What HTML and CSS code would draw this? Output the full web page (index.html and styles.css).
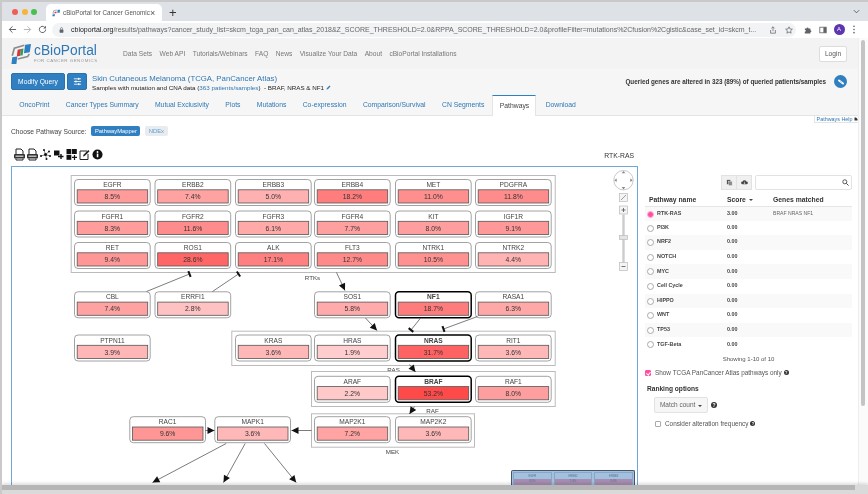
FILE: index.html
```html
<!DOCTYPE html>
<html lang="en">
<head>
    <meta charset="UTF-8">
    <meta name="viewport" content="width=device-width, initial-scale=1.0">
    <title>cBioPortal for Cancer Genomics</title>
    <link rel="stylesheet" href="styles.css">
</head>
<body>
    <div class="tabstrip">
        <div class="lights"><span class="light red"></span><span class="light yellow"></span><span class="light green"></span></div>
        <div class="tab">
            <svg class="favicon" viewBox="0 0 24 20"><path d="M3 13 5 3 15 1" fill="none" stroke="#8a8a8a" stroke-width="2"/><path d="M17 0h7l-1 9h-7z" fill="#2f7fc1"/><path d="M8 6h6l-1 5H7z" fill="#d9343a"/><path d="M2 14h7l-1 6H1z" fill="#2f7fc1"/></svg>
            <span class="tab-title">cBioPortal for Cancer Genomic</span>
            <span class="tab-close">×</span>
        </div>
        <span class="tab-new">+</span>
        <svg class="tab-menu" viewBox="0 0 8 5"><path d="M1 1l3 3 3-3" fill="none" stroke="#555" stroke-width="1"/></svg>
    </div>

    <div class="urlbar">
        <svg class="nav-icon back" viewBox="0 0 10 10"><path d="M9 5H1.5M5 1.5 1.5 5 5 8.5" fill="none" stroke="#5f6368" stroke-width="1.1"/></svg>
        <svg class="nav-icon forward" viewBox="0 0 10 10"><path d="M1 5h7.500M5 1.500 8.500 5 5 8.500" fill="none" stroke="#b4b6b9" stroke-width="1.1"/></svg>
        <svg class="nav-icon reload" viewBox="0 0 10 10"><path d="M8.500 5A3.500 3.500 0 1 1 7.400 2.400" fill="none" stroke="#5f6368" stroke-width="1.100"/><path d="M8.800 .8v3h-3z" fill="#5f6368"/></svg>
        <div class="omnibox">
            <svg class="lock" viewBox="0 0 6 8"><rect x=".5" y="3.200" width="5" height="4.300" rx=".6" fill="#5f6368"/><path d="M1.700 3.500V2a1.300 1.300 0 0 1 2.600 0v1.500" fill="none" stroke="#5f6368" stroke-width=".8"/></svg>
            <span class="url"><b>cbioportal.org</b>/results/pathways?cancer_study_list=skcm_tcga_pan_can_atlas_2018&amp;Z_SCORE_THRESHOLD=2.0&amp;RPPA_SCORE_THRESHOLD=2.0&amp;profileFilter=mutations%2Cfusion%2Cgistic&amp;case_set_id=skcm_t...</span>
            <svg class="omni-icon" viewBox="0 0 10 10"><path d="M5 6.500V1M3 3l2-2 2 2M2 5v4h6V5" fill="none" stroke="#5f6368" stroke-width=".9"/></svg>
            <svg class="omni-icon" viewBox="0 0 10 10"><path d="M5 1l1.200 2.700 3 .3-2.200 2 .6 3L5 7.500 2.400 9l.6-3L.8 4l3-.3z" fill="none" stroke="#5f6368" stroke-width=".9"/></svg>
        </div>
        <svg class="bar-icon" viewBox="0 0 10 10"><path d="M1 3h2.200a1.200 1.200 0 0 1 2.400 0H8v2.300a1.200 1.200 0 0 1 0 2.400V9.500H1V7.200a1.200 1.200 0 0 0 0-2.400z" fill="#5f6368"/></svg>
        <svg class="bar-icon" viewBox="0 0 10 10"><rect x="1" y="1.500" width="8" height="7" fill="none" stroke="#5f6368"/><rect x="5.500" y="1.500" width="3.500" height="7" fill="#5f6368"/></svg>
        <span class="avatar">A</span>
        <svg class="kebab" viewBox="0 0 4 10"><circle cx="2" cy="1.500" r=".9" fill="#5f6368"/><circle cx="2" cy="5" r=".9" fill="#5f6368"/><circle cx="2" cy="8.500" r=".9" fill="#5f6368"/></svg>
    </div>

    <div class="viewport">
        <main class="page">
            <header class="navbar">
                <div class="logo">
                    <svg class="logo-mark" viewBox="0 0 24 24">
                        <path d="M1.500 14 4 5 16 1.500" fill="none" stroke="#8c8c8c" stroke-width="2"/>
                        <path d="M17 1 24 0l-1.500 10-7 1z" fill="#2f7fc1"/>
                        <path d="M8 7l4-1-1 8-4 1z" fill="#d9343a"/>
                        <path d="M12 6l3-.5-1 8-3 .5z" fill="#2e9e5b"/>
                        <path d="M1.500 16l6-1-1 9H.5z" fill="#2f7fc1"/>
                        <path d="M8 18 20 15l2-3" fill="none" stroke="#8c8c8c" stroke-width="1.800"/>
                    </svg>
                    <div class="logo-text">
                        <span class="logo-name">cBioPortal</span>
                        <span class="logo-sub">FOR CANCER GENOMICS</span>
                    </div>
                </div>
                <nav class="nav-links">
                    <a>Data Sets</a><a>Web API</a><a>Tutorials/Webinars</a><a>FAQ</a><a>News</a><a>Visualize Your Data</a><a>About</a><a>cBioPortal Installations</a>
                </nav>
                <button class="login" type="button">Login</button>
            </header>

            <section class="study">
                <button class="btn-primary modify" type="button">Modify Query</button>
                <button class="btn-primary sliders" type="button">
                    <svg viewBox="0 0 10 10"><path d="M1 2h8M1 5h8M1 8h8" stroke="#fff" stroke-width=".9"/><rect x="5.500" y="1" width="1.600" height="2" fill="#fff"/><rect x="2.500" y="4" width="1.600" height="2" fill="#fff"/><rect x="5.500" y="7" width="1.600" height="2" fill="#fff"/></svg>
                </button>
                <div class="study-info">
                    <a class="study-title">Skin Cutaneous Melanoma (TCGA, PanCancer Atlas)</a>
                    <p class="study-sub">Samples with mutation and CNA data (<a>363 patients/samples</a>) &nbsp;- BRAF, NRAS &amp; NF1
                        <svg class="pencil" viewBox="0 0 8 8"><path d="M.8 7.200 1.300 5 5.500.8l1.700 1.700L3 6.700z" fill="#2f7fc1"/></svg>
                    </p>
                </div>
                <p class="altered">Queried genes are altered in 323 (89%) of queried patients/samples</p>
                <span class="share-link">
                    <svg viewBox="0 0 10 10"><path d="M2.500 3 7.500 7" stroke="#fff" stroke-width="2.400" stroke-linecap="round"/><path d="M4.400 4.500 5.600 5.500" stroke="#2f7fc1" stroke-width=".8"/></svg>
                </span>
            </section>

            <nav class="tabs">
                <a>OncoPrint</a><a>Cancer Types Summary</a><a>Mutual Exclusivity</a><a>Plots</a><a>Mutations</a><a>Co-expression</a><a>Comparison/Survival</a><a>CN Segments</a><a class="active">Pathways</a><a>Download</a>
            </nav>

            <div class="content">
                <a class="help-tag">Pathways Help <svg viewBox="0 0 8 8"><path d="M1 1h3l3 3v3H1z" fill="#333"/></svg></a>

                <div class="left">
                    <div class="source">
                        <span>Choose Pathway Source:</span>
                        <span class="pill on">PathwayMapper</span>
                        <span class="pill">NDEx</span>
                    </div>
                    <div class="tools">
                        <div class="tool-icons">
                            <svg viewBox="0 0 11 13"><path d="M2 6V1h5l2 2v3" fill="none" stroke="#222"/><rect y="6" width="11" height="4.500" rx="1" fill="#333"/><rect x="1.500" y="7.500" width="8" height="1.500" fill="#bbb"/><path d="M2 10.500V12h7v-1.500" fill="none" stroke="#222"/></svg>
                            <svg viewBox="0 0 11 13"><path d="M2 6V1h5l2 2v3" fill="none" stroke="#222"/><rect y="6" width="11" height="4.500" rx="1" fill="#333"/><rect x="1.500" y="7.500" width="8" height="1.500" fill="#bbb"/><path d="M2 10.500V12h7v-1.500" fill="none" stroke="#222"/></svg>
                            <svg viewBox="0 0 11 13"><path d="M5.500 6.500 1 8M5.500 6.500 4 2M5.500 6.500 9 3.500M5.500 6.500 10 8M5.500 6.500 6.500 11" stroke="#333" stroke-width=".6"/><circle cx="5.500" cy="6.500" r="1.500" fill="#111"/><circle cx="1" cy="8" r="1" fill="#111"/><circle cx="4" cy="2" r="1" fill="#111"/><circle cx="9" cy="3.500" r="1" fill="#111"/><circle cx="10" cy="8" r="1" fill="#111"/><circle cx="6.500" cy="11" r="1" fill="#111"/></svg>
                            <svg viewBox="0 0 11 13"><rect x="1" y="2.500" width="5.500" height="5" fill="#111"/><path d="M5 8.500h5.500M8 6v5" stroke="#111" stroke-width="1.400"/></svg>
                            <svg viewBox="0 0 11 13"><rect x=".5" y="1" width="4.800" height="5" fill="#111"/><rect x="6" y="1" width="4.800" height="5" fill="#111"/><rect x=".5" y="6.800" width="4.800" height="5" fill="#111"/><path d="M6 9.300h5M8.500 7v5" stroke="#111" stroke-width="1.200"/></svg>
                            <svg viewBox="0 0 11 13"><path d="M8 3H1v8.500h8V6" fill="none" stroke="#222" stroke-width="1"/><path d="M4 8.500 4.500 6.800 9.300 2l1.200 1.200L5.700 8z" fill="#222"/></svg>
                            <svg viewBox="0 0 12 13"><circle cx="6" cy="6.500" r="5.500" fill="#111"/><rect x="5.200" y="5.500" width="1.700" height="4" fill="#fff"/><circle cx="6" cy="3.800" r="1" fill="#fff"/></svg>
                        </div>
                        <span class="pathway-name">RTK-RAS</span>
                    </div>
                    <div class="canvas">
                        <svg id="pathway" class="diagram" viewBox="12.5 167.5 622 317"></svg>
                        <div class="minimap">
                            <div class="mini-node"><span>EGFR</span><b>8.5%</b></div>
                            <div class="mini-node"><span>ERBB2</span><b>7.4%</b></div>
                            <div class="mini-node"><span>ERBB3</span><b>5.0%</b></div>
                        </div>
                    </div>
                </div>

                <aside class="right">
                    <div class="table-tools">
                        <div class="btn-group">
                            <button type="button"><svg viewBox="0 0 8 8"><rect x="1" y="1" width="4" height="5" fill="#555"/><rect x="3" y="2.500" width="4" height="5" fill="#888" stroke="#eee" stroke-width=".5"/></svg></button>
                            <button type="button"><svg viewBox="0 0 8 8"><path d="M1.500 6a1.500 1.500 0 0 1 .3-3A2.300 2.300 0 0 1 6.200 3 1.500 1.500 0 0 1 6.500 6z" fill="#444"/><path d="M4 3v2.500M3 4.500l1 1 1-1" stroke="#eee" stroke-width=".6" fill="none"/></svg></button>
                        </div>
                        <div class="search"><svg viewBox="0 0 8 8"><circle cx="3.200" cy="3.200" r="2.300" fill="none" stroke="#444"/><path d="M5 5l2.500 2.500" stroke="#444" stroke-width="1.100"/></svg></div>
                    </div>
                    <table class="pathways">
                        <thead>
                            <tr><th class="col-name">Pathway name</th><th class="col-score">Score <i class="caret"></i></th><th>Genes matched</th></tr>
                        </thead>
                        <tbody>
                            <tr><td class="col-name"><i class="radio on"></i>RTK-RAS</td><td class="col-score">3.00</td><td class="genes">BRAF NRAS NF1</td></tr>
                            <tr><td class="col-name"><i class="radio"></i>PI3K</td><td class="col-score">0.00</td><td></td></tr>
                            <tr><td class="col-name"><i class="radio"></i>NRF2</td><td class="col-score">0.00</td><td></td></tr>
                            <tr><td class="col-name"><i class="radio"></i>NOTCH</td><td class="col-score">0.00</td><td></td></tr>
                            <tr><td class="col-name"><i class="radio"></i>MYC</td><td class="col-score">0.00</td><td></td></tr>
                            <tr><td class="col-name"><i class="radio"></i>Cell Cycle</td><td class="col-score">0.00</td><td></td></tr>
                            <tr><td class="col-name"><i class="radio"></i>HIPPO</td><td class="col-score">0.00</td><td></td></tr>
                            <tr><td class="col-name"><i class="radio"></i>WNT</td><td class="col-score">0.00</td><td></td></tr>
                            <tr><td class="col-name"><i class="radio"></i>TP53</td><td class="col-score">0.00</td><td></td></tr>
                            <tr><td class="col-name"><i class="radio"></i>TGF-Beta</td><td class="col-score">0.00</td><td></td></tr>
                        </tbody>
                    </table>
                    <p class="showing">Showing 1-10 of 10</p>
                    <label class="check-row"><i class="check on"></i>Show TCGA PanCancer Atlas pathways only <i class="help">?</i></label>
                    <h4 class="ranking">Ranking options</h4>
                    <div class="rank-row"><button class="match" type="button">Match count <i class="caret"></i></button><i class="help big">?</i></div>
                    <label class="check-row alt"><i class="check"></i>Consider alteration frequency <i class="help">?</i></label>
                </aside>
            </div>
        </main>
        <div class="vscroll"><div class="vthumb"></div></div>
    </div>
    <div class="hscroll"><div class="hthumb"></div></div>

    <script src="pathway.js"></script>
</body>
</html>
```

FILE: styles.css
```css
* {
    box-sizing: border-box;
}

html, body {
    margin: 0;
    height: 494px;
    overflow: hidden;
}

body {
    font-family: "Liberation Sans", Arial, sans-serif;
    background-color: #fff;
    color: #333;
    border-left: 2px solid #c9c9c9;
    display: flex;
    flex-direction: column;
    filter: blur(0.3px);
}

p, h4 {
    margin: 0;
}

button {
    font-family: inherit;
    padding: 0;
}

/* browser chrome */
.tabstrip {
    height: 21px;
    flex: none;
    background-color: #dee1e6;
    border-top: 2px solid #c9c9c9;
    display: flex;
    align-items: flex-end;
    position: relative;
}

.lights {
    width: 44px;
    padding-left: 10px;
    align-self: center;
    display: flex;
    gap: 3.500px;
}

.light {
    width: 6px;
    height: 6px;
    border-radius: 50%;
}

.red { background-color: #ee5f56; }
.yellow { background-color: #f4b53a; }
.green { background-color: #47c04f; }

.tab {
    width: 116px;
    height: 17px;
    background-color: #fff;
    border-radius: 5px 5px 0 0;
    display: flex;
    align-items: center;
    padding: 0 3px 0 6px;
    font-size: 6.300px;
    color: #555;
}

.favicon {
    width: 8px;
    height: 8px;
    margin-right: 3px;
}

.tab-title {
    flex: 1;
    white-space: nowrap;
}

.tab-close {
    font-size: 9px;
    width: 9px;
}

.tab-new {
    font-size: 13px;
    color: #333;
    margin-left: 7px;
    line-height: 17px;
}

.tab-menu {
    width: 7px;
    height: 5px;
    margin-left: auto;
    margin-right: 8px;
    align-self: center;
}

.urlbar {
    height: 17px;
    flex: none;
    background-color: #fff;
    display: flex;
    align-items: center;
    padding-left: 6px;
}

.nav-icon {
    width: 9px;
    height: 9px;
    margin-right: 6px;
}

.omnibox {
    width: 744px;
    height: 14px;
    margin-left: -1px;
    margin-right: 8px;
    background-color: #f1f3f4;
    border-radius: 7px;
    display: flex;
    align-items: center;
    padding-left: 7px;
    padding-right: 3px;
    gap: 7px;
}

.lock {
    width: 5px;
    height: 6px;
    flex: none;
}

.url {
    flex: 1;
    font-size: 7px;
    line-height: 14px;
    color: #666;
    white-space: nowrap;
}

.url b {
    font-weight: normal;
    color: #222;
}

.omni-icon {
    width: 8px;
    height: 8px;
    flex: none;
    margin-left: 1px;
}

.bar-icon {
    width: 8px;
    height: 8px;
    margin-right: 7px;
}

.avatar {
    width: 11px;
    height: 11px;
    border-radius: 50%;
    background-color: #5e35b1;
    color: #fff;
    font-size: 6px;
    line-height: 11px;
    text-align: center;
    margin-left: -.5px;
}

.kebab {
    width: 4px;
    height: 9px;
    margin-left: 7.500px;
}

/* page */
.viewport {
    height: 447px;
    flex: none;
    display: flex;
}

.page {
    width: 856px;
    flex: none;
    overflow: hidden;
}

.vscroll {
    flex: 1;
    background-color: #fbfbfb;
    border-left: 1px solid #eee;
    padding: 2px 3px 0 2px;
}

.vthumb {
    height: 366px;
    background-color: #c4c4c4;
    border-radius: 2px;
}

.hscroll {
    flex: 1;
    position: relative;
    background-color: #dadada;
    box-shadow: 0 -2px 3px rgba(0, 0, 0, 0.12);
}

.hthumb {
    width: 853px;
    height: 5px;
    background-color: #b6b6b6;
}

.navbar {
    height: 31px;
    background-color: #f3f3f3;
    display: flex;
    align-items: center;
    padding: 0 11px 0 9px;
}

.logo {
    display: flex;
    align-items: center;
    width: 112px;
}

.logo-mark {
    width: 20px;
    height: 20px;
    margin-right: 3px;
}

.logo-text {
    display: flex;
    flex-direction: column;
    margin-top: 1px;
}

.logo-name {
    font-size: 13.800px;
    line-height: 14px;
    color: #2f78b4;
}

.logo-sub {
    font-size: 4.400px;
    line-height: 6px;
    letter-spacing: .5px;
    color: #999;
    white-space: nowrap;
}

.nav-links {
    display: flex;
    gap: 7.400px;
    font-size: 6.650px;
    color: #777;
}

.login {
    margin-left: auto;
    width: 28px;
    height: 16px;
    background-color: #fff;
    border: 1px solid #ddd;
    border-radius: 2px;
    font-size: 6.600px;
    color: #555;
}

.study {
    height: 26px;
    background-color: #f6f6f6;
    display: flex;
    align-items: flex-start;
    padding: 4px 11px 0 9px;
}

.btn-primary {
    height: 17px;
    background-color: #2f7fc1;
    border: 1px solid #2a72ad;
    border-radius: 2px;
    color: #fff;
    font-size: 6.700px;
}

.modify {
    width: 54px;
    margin-right: 2px;
}

.sliders {
    width: 20px;
    margin-right: 5px;
}

.sliders svg {
    width: 9px;
    height: 9px;
    display: block;
    margin: auto;
}

.study-title {
    display: block;
    font-size: 7.800px;
    line-height: 9px;
    margin-top: 1px;
    color: #2f78b4;
    white-space: nowrap;
}

.study-sub {
    font-size: 6.250px;
    line-height: 9px;
    margin-top: 0;
    color: #222;
    white-space: nowrap;
}

.study-sub a {
    color: #2f78b4;
}

.pencil {
    width: 5px;
    height: 5px;
}

.altered {
    margin-left: auto;
    margin-top: 5px;
    font-size: 6.300px;
    font-weight: bold;
    color: #333;
    white-space: nowrap;
}

.share-link {
    width: 13px;
    height: 13px;
    margin-left: 8px;
    margin-top: 2px;
    border-radius: 50%;
    background-color: #2f7fc1;
    display: flex;
    align-items: center;
    justify-content: center;
}

.share-link svg {
    width: 8px;
    height: 8px;
}

.tabs {
    height: 21px;
    background-color: #f6f6f6;
    border-bottom: 1px solid #e4e4e4;
    display: flex;
    gap: 0;
    padding-left: 9px;
    font-size: 6.800px;
    color: #2f78b4;
    line-height: 20px;
}

.tabs a {
    padding: 0 8.200px;
    white-space: nowrap;
}

.tabs .active {
    background-color: #fff;
    color: #444;
    border-top: 1px solid #2f7fc1;
    border-left: 1px solid #e4e4e4;
    border-right: 1px solid #e4e4e4;
    height: 21px;
    width: 44px;
    padding: 0;
    text-align: center;
    margin: 0 1px 0 0;
    line-height: 20px;
}

.content {
    position: relative;
    display: flex;
    padding-left: 9px;
    background-color: #fff;
}

.help-tag {
    position: absolute;
    top: 0;
    right: 0;
    padding-left: 2px;
    font-size: 5.400px;
    line-height: 6px;
    color: #2f78b4;
    border-left: 1px solid #e4e4e4;
    border-bottom: 1px solid #e4e4e4;
    white-space: nowrap;
}

.help-tag svg {
    width: 4px;
    height: 4px;
}

.left {
    width: 627px;
    flex: none;
}

.source {
    display: flex;
    align-items: center;
    gap: 5px;
    height: 10px;
    margin-top: 10px;
    font-size: 6.700px;
    color: #444;
}

.pill {
    height: 10px;
    line-height: 10px;
    padding: 0 3.500px;
    border-radius: 2px;
    background-color: #e9ecef;
    color: #5f9bd0;
    font-size: 5.800px;
}

.pill.on {
    background-color: #2f7fc1;
    color: #fff;
}

.tools {
    display: flex;
    justify-content: space-between;
    align-items: center;
    height: 13px;
    margin-top: 12px;
    padding-left: 3px;
    padding-right: 4px;
}

.tool-icons {
    display: flex;
    gap: 2px;
}

.tool-icons svg {
    width: 11px;
    height: 13px;
}

.pathway-name {
    font-size: 6.800px;
    color: #333;
    margin-top: 1px;
}

.canvas {
    position: relative;
    height: 319px;
    margin-top: 5px;
    border: 2px solid #6fa8d8;
    border-width: 1.500px 1.500px 0 1.500px;
    overflow: hidden;
}

.diagram {
    display: block;
    width: 622px;
    height: 317px;
    font-family: "Liberation Sans", Arial, sans-serif;
}

.minimap {
    position: absolute;
    right: 2px;
    bottom: 0;
    width: 124px;
    height: 15px;
    background-color: #a3c0de;
    border: 1px solid #44556a;
    border-bottom: 0;
    border-radius: 2px 2px 0 0;
    display: flex;
    gap: 2px;
    padding: 1px 1px 0;
}

.mini-node {
    flex: 1;
    border: 1px solid #8aa6c6;
    border-bottom: 0;
    border-radius: 1px;
    font-size: 2.800px;
    text-align: center;
    color: #5b6f88;
    display: flex;
    flex-direction: column;
}

.mini-node span {
    height: 6px;
    line-height: 6px;
}

.mini-node b {
    flex: 1;
    background-color: #a68db2;
    font-weight: normal;
    line-height: 5px;
}

.right {
    width: 207px;
    margin-left: 7px;
    padding-top: 59px;
}

.table-tools {
    display: flex;
    justify-content: flex-end;
    gap: 3px;
    height: 15px;
}

.btn-group {
    display: flex;
}

.btn-group button {
    width: 16px;
    height: 15px;
    background-color: #f0f0f0;
    border: 1px solid #e2e2e2;
    margin-left: -1px;
}

.btn-group svg {
    width: 7px;
    height: 7px;
    display: block;
    margin: auto;
}

.search {
    width: 97px;
    height: 15px;
    border: 1px solid #e2e2e2;
    border-radius: 2px;
    display: flex;
    align-items: center;
    justify-content: flex-end;
    padding-right: 2px;
}

.search svg {
    width: 7px;
    height: 7px;
}

.pathways {
    width: 207px;
    margin-top: 5px;
    border-collapse: collapse;
    table-layout: fixed;
}

.pathways th {
    height: 11px;
    font-size: 6.800px;
    text-align: left;
    color: #333;
    padding: 0 0 1px;
    border-bottom: 1px solid #e6e6e6;
}

.pathways th.col-name {
    padding-left: 4px;
    width: 82px;
}

.pathways th.col-score {
    width: 46px;
}

.pathways td {
    height: 14.600px;
    font-size: 5.400px;
    padding: 0 0 2px;
    vertical-align: middle;
}

.pathways td.col-name,
.pathways td.col-score {
    font-weight: bold;
    color: #444;
}

.pathways td.col-name {
    position: relative;
    padding-left: 12px;
}

.pathways td.genes {
    font-size: 5.100px;
    color: #666;
}

.pathways tbody tr:nth-child(odd) {
    background-color: #f9f9f9;
}

.radio {
    position: absolute;
    left: 2px;
    top: 4px;
    width: 7px;
    height: 7px;
    border: 1px solid #aaa;
    border-radius: 50%;
    background-color: #fff;
}

.radio.on {
    background-color: #ff4fa0;
    border-color: #ffb3d6;
}

.caret {
    display: inline-block;
    width: 0;
    height: 0;
    border-left: 2px solid transparent;
    border-right: 2px solid transparent;
    border-top: 2px solid #444;
    vertical-align: middle;
    margin-left: 1px;
}

.showing {
    text-align: center;
    font-size: 6px;
    line-height: 8px;
    margin-top: 3px;
    color: #555;
}

.check-row {
    display: flex;
    align-items: center;
    font-size: 6.400px;
    line-height: 8px;
    margin-top: 6px;
    color: #555;
}

.check {
    position: relative;
    width: 6px;
    height: 6px;
    border: 1px solid #aaa;
    border-radius: 1px;
    margin-right: 4px;
    background-color: #fff;
}

.check.on {
    background-color: #ff4fa0;
    border-color: #ff4fa0;
}

.check.on::after {
    content: "";
    position: absolute;
    left: 1px;
    top: 0;
    width: 1.500px;
    height: 3px;
    border: solid #fff;
    border-width: 0 .8px .8px 0;
    transform: rotate(40deg);
}

.help {
    width: 5px;
    height: 5px;
    border-radius: 50%;
    background-color: #333;
    color: #fff;
    font-size: 4px;
    font-style: normal;
    font-weight: bold;
    line-height: 5px;
    text-align: center;
    margin-left: 2px;
}

.help.big {
    width: 6px;
    height: 6px;
    line-height: 6px;
    font-size: 5px;
    margin-left: 3px;
}

.ranking {
    font-size: 6.600px;
    line-height: 8px;
    margin-top: 8px;
    margin-left: 2px;
    color: #333;
}

.rank-row {
    display: flex;
    align-items: center;
    margin: 4px 0 0 9px;
}

.match {
    width: 54px;
    height: 16px;
    background-color: #f6f6f6;
    border: 1px solid #e2e2e2;
    border-radius: 2px;
    font-size: 6.500px;
    color: #666;
}

.check-row.alt {
    margin: 7px 0 0 10px;
}
```

FILE: pathway.js
```javascript
// gene boxes of the RTK-RAS pathway, positions are in page pixels
const COLS = [75, 155.5, 236, 315, 396, 476];
const NODE_W = 75.7;
const NODE_H = 26;

const nodes = [
    ['EGFR', 8.5, 0, 180], ['ERBB2', 7.4, 1, 180], ['ERBB3', 5.0, 2, 180], ['ERBB4', 18.2, 3, 180], ['MET', 11.0, 4, 180], ['PDGFRA', 11.8, 5, 180],
    ['FGFR1', 8.3, 0, 211.5], ['FGFR2', 11.6, 1, 211.5], ['FGFR3', 6.1, 2, 211.5], ['FGFR4', 7.7, 3, 211.5], ['KIT', 8.0, 4, 211.5], ['IGF1R', 9.1, 5, 211.5],
    ['RET', 9.4, 0, 243], ['ROS1', 28.6, 1, 243], ['ALK', 17.1, 2, 243], ['FLT3', 12.7, 3, 243], ['NTRK1', 10.5, 4, 243], ['NTRK2', 4.4, 5, 243],
    ['CBL', 7.4, 0, 292.3], ['ERRFI1', 2.8, 1, 292.3], ['SOS1', 5.8, 3, 292.3], ['NF1', 18.7, 4, 292.3, true], ['RASA1', 6.3, 5, 292.3],
    ['PTPN11', 3.9, 0, 335.5], ['KRAS', 3.6, 2, 335.5], ['HRAS', 1.9, 3, 335.5], ['NRAS', 31.7, 4, 335.5, true], ['RIT1', 3.6, 5, 335.5],
    ['ARAF', 2.2, 3, 376.8], ['BRAF', 53.2, 4, 376.8, true], ['RAF1', 8.0, 5, 376.8],
    ['MAP2K1', 7.2, 3, 417.2], ['MAP2K2', 3.6, 4, 417.2]
];

// these two don't sit on the column grid
const looseNodes = [
    ['RAC1', 9.6, 130.3, 417.2], ['MAPK1', 3.6, 215.3, 417.2]
];

const groups = [
    ['RTKs', 71.7, 176, 484, 97, 313, 280],
    ['RAS', 232.3, 331.7, 323.4, 34.3, 394, 372.5],
    ['RAF', 312, 372, 243.7, 35, 433, 413.5],
    ['MEK', 312, 414.3, 163, 33.4, 393, 454]
];

// x1, y1, x2, y2
const arrows = [
    [337, 273, 345.5, 291], [366, 318.5, 377.5, 331], [410, 365, 416, 372.5], [415, 407, 410, 414.5],
    [206, 431, 215, 431], [312, 431, 292, 431],
    [226.7, 444, 153, 483], [245.7, 444, 224, 483], [265, 444, 296.7, 483]
];
const inhibitors = [
    [147, 292, 190, 274.5], [213, 292, 239, 274.5], [420.7, 319, 411.5, 330.5], [478, 317, 444, 329.5]
];

const SVG_NS = 'http://www.w3.org/2000/svg';
const svg = document.getElementById('pathway');

function add(tag, attrs, text) {
    const el = document.createElementNS(SVG_NS, tag);
    Object.keys(attrs).forEach(function (k) { el.setAttribute(k, attrs[k]); });
    if (text) el.textContent = text;
    svg.appendChild(el);
    return el;
}

// alteration frequency to the green/blue channel of the bar colour
function shade(p) {
    const stops = [[0, 225], [1.9, 205], [3.6, 184], [5, 176], [8.5, 155], [11.6, 140], [18.2, 125], [28.6, 102], [53.2, 74]];
    for (let i = 1; i < stops.length; i++) {
        if (p <= stops[i][0]) {
            const a = stops[i - 1], b = stops[i];
            return Math.round(a[1] + (b[1] - a[1]) * (p - a[0]) / (b[0] - a[0]));
        }
    }
    return 74;
}

function drawNode(name, pct, x, y, strong) {
    add('rect', { x: x, y: y, width: NODE_W, height: NODE_H, rx: 3.5, fill: '#fff', stroke: strong ? '#000' : '#8a8a8a', 'stroke-width': strong ? 1.5 : 0.8 });
    add('text', { x: x + NODE_W / 2, y: y + 7.6, 'font-size': 6.6, 'text-anchor': 'middle', fill: '#444', 'font-weight': strong ? 'bold' : 'normal' }, name);
    const g = shade(pct);
    add('rect', { x: x + 2.7, y: y + 10.3, width: NODE_W - 5.2, height: 13.2, fill: 'rgb(255,' + g + ',' + g + ')', stroke: '#555', 'stroke-width': 0.8 });
    add('text', { x: x + NODE_W / 2, y: y + 19.6, 'font-size': 6.8, 'text-anchor': 'middle', fill: '#333' }, pct.toFixed(1) + '%');
}

groups.forEach(function (g) {
    add('rect', { x: g[1], y: g[2], width: g[3], height: g[4], fill: '#fff', stroke: '#bbb', 'stroke-width': 1 });
    add('text', { x: g[5], y: g[6], 'font-size': 6.2, 'text-anchor': 'middle', fill: '#444' }, g[0]);
});

nodes.forEach(function (n) { drawNode(n[0], n[1], COLS[n[2]], n[3], n[4]); });
looseNodes.forEach(function (n) { drawNode(n[0], n[1], n[2], n[3]); });

arrows.forEach(function (a) {
    add('line', { x1: a[0], y1: a[1], x2: a[2], y2: a[3], stroke: '#444', 'stroke-width': 0.7 });
    const ang = Math.atan2(a[3] - a[1], a[2] - a[0]);
    const cos = Math.cos(ang), sin = Math.sin(ang);
    const bx = a[2] - cos * 7, by = a[3] - sin * 7;
    const pts = [a[2], a[3], bx - sin * 3.4, by + cos * 3.4, bx + sin * 3.4, by - cos * 3.4];
    add('polygon', { points: pts.join(' '), fill: '#111' });
});

inhibitors.forEach(function (a) {
    add('line', { x1: a[0], y1: a[1], x2: a[2], y2: a[3], stroke: '#444', 'stroke-width': 0.7 });
    const ang = Math.atan2(a[3] - a[1], a[2] - a[0]);
    const cos = Math.cos(ang), sin = Math.sin(ang);
    add('line', { x1: a[2] - sin * 3, y1: a[3] + cos * 3, x2: a[2] + sin * 3, y2: a[3] - cos * 3, stroke: '#111', 'stroke-width': 2 });
});

// pan and zoom control
const PX = 624;
add('circle', { cx: PX, cy: 180.7, r: 9.7, fill: '#fff', stroke: '#bbb', 'stroke-width': 0.8 });
[[PX, 172.6, 0], [PX + 8, 180.7, 90], [PX, 188.8, 180], [PX - 8, 180.7, 270]].forEach(function (t) {
    add('polygon', { points: '-1.8,1.2 1.8,1.2 0,-1.2', fill: '#888', transform: 'translate(' + t[0] + ' ' + t[1] + ') rotate(' + t[2] + ')' });
});
add('line', { x1: PX, y1: 215, x2: PX, y2: 264, stroke: '#ccc', 'stroke-width': 2.4 });
[194, 206.5, 263].forEach(function (y) {
    add('rect', { x: PX - 4, y: y, width: 8, height: 8, fill: '#f4f4f4', stroke: '#bbb', 'stroke-width': 0.7 });
});
add('rect', { x: PX - 4, y: 236, width: 8, height: 4, fill: '#e4e4e4', stroke: '#bbb', 'stroke-width': 0.7 });
add('path', { d: 'M621.5 200.500 626.500 195.500', stroke: '#888', 'stroke-width': 0.8 });
add('path', { d: 'M622 210.500h4M624 208.500v4M622 267h4', stroke: '#555', 'stroke-width': 0.8 });
```
